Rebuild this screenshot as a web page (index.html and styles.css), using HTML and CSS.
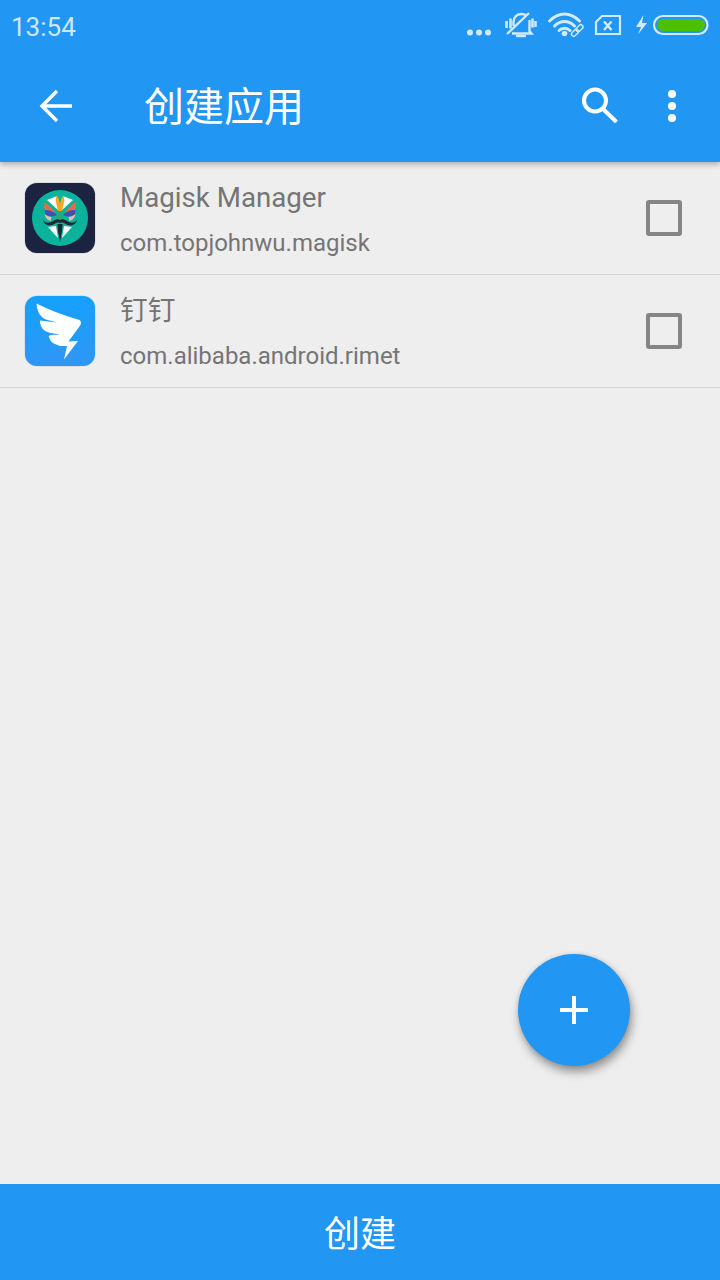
FILE: index.html
```html
<!DOCTYPE html>
<html lang="zh">
<head>
<meta charset="utf-8">
<title>创建应用</title>
<link rel="stylesheet" href="styles.css">
</head>
<body>
<div class="screen">
  <header class="header">
    <div class="status">
      <span class="time">13:54</span>
      <svg class="status-icons" width="270" height="50" viewBox="0 0 270 50" fill="none" stroke="#d3e9fc">
        <g fill="#d3e9fc" stroke="none"><circle cx="20" cy="32.500" r="3"/><circle cx="29" cy="32.500" r="3"/><circle cx="38" cy="32.500" r="3"/></g>
        <g stroke-width="2.400">
          <path d="M63.500 26v-4c0-5 3.500-8 8-8 2 0 3.500 .5 5 1.500"/>
          <path d="M79.500 20v11l2 2.500H62"/>
          <path d="M66 36h10"/>
          <path d="M56.500 21v7M60.500 18.500v10M82.500 18.500v9M85.500 21v6" stroke-width="2.600"/>
          <path d="M57 34L79 13"/>
        </g>
        <g stroke-width="3" stroke-linecap="round">
          <path d="M99.500 21c9-9.500 21-9.500 30 0"/>
          <path d="M104.500 26c6-6 14-6 20 0"/>
          <path d="M109 30.500c3-3 8-3 11 0"/>
        </g>
        <circle cx="114.500" cy="33.500" r="2.800" fill="#d3e9fc" stroke="none"/>
        <g stroke-width="1.400">
          <rect x="121" y="30.500" width="8" height="4.500" rx="2.200" transform="rotate(-45 125 32.750)"/>
          <rect x="125.500" y="26" width="8" height="4.500" rx="2.200" transform="rotate(-45 129.500 28.250)"/>
        </g>
        <path d="M146 22l6-6h18v18h-24z" stroke-width="2.200"/>
        <path d="M154 21.500l7.500 8.500M161.500 21.500L154 30" stroke-width="2.400"/>
        <path d="M193.500 15L186 27h5l-3 7.500L197 23h-5z" fill="#d3e9fc" stroke="none"/>
        <rect x="204" y="16" width="53.500" height="18" rx="9" stroke-width="2.200"/>
        <rect x="207" y="19" width="48" height="12" rx="6" fill="#4cc000" stroke="none"/>
      </svg>
    </div>
    <div class="toolbar">
      <svg class="icon-back" width="36" height="36" viewBox="0 0 36 36" fill="none" stroke="#fff" stroke-width="3.400">
        <path d="M33 18H3.500M18 3L3 18l15 15"/>
      </svg>
      <h1 class="title">创建应用</h1>
      <svg class="icon-search" width="36" height="36" viewBox="0 0 36 36" fill="none" stroke="#fff">
        <circle cx="13" cy="13.500" r="11" stroke-width="4"/>
        <path d="M21 22L34.500 35" stroke-width="4"/>
      </svg>
      <svg class="icon-more" width="12" height="36" viewBox="0 0 12 36" fill="#fff">
        <circle cx="6" cy="6" r="4"/><circle cx="6" cy="18" r="4"/><circle cx="6" cy="30" r="4"/>
      </svg>
    </div>
  </header>

  <main class="list">
    <div class="row">
      <svg class="app-icon" width="72" height="72" viewBox="-1 -1 72 72">
        <rect x="-0.500" y="-0.500" width="71" height="71" rx="12.500" fill="#c9cbd0"/>
        <rect width="70" height="70" rx="12" fill="#1b2340"/>
        <circle cx="35" cy="35" r="28" fill="#0cb39c"/>
        <path d="M22 17l10-4 1 14z" fill="#fff"/>
        <path d="M48 17l-10-4-1 14z" fill="#fff"/>
        <path d="M31 13c2 0 3 3 4 8 1-5 2-8 4-8 1 5-1 10-2 15h-4c-1-5-3-10-2-15z" fill="#f6a821"/>
        <path d="M20 19c-1 3-1 6 0 8 3 0 6 1 9 3l1-1z" fill="#f26a3b"/>
        <path d="M50 19c1 3 1 6 0 8-3 0-6 1-9 3l-1-1z" fill="#f26a3b"/>
        <path d="M19.500 27c5 0 9 1 12.500 5-3 2-9 2-12-1z" fill="#3f51b5"/>
        <path d="M50.500 27c-5 0-9 1-12.500 5 3 2 9 2 12-1z" fill="#3f51b5"/>
        <path d="M19.500 31c2 2 5 3 7 3l-1 4c-3-1-5-3-6-7z" fill="#f7b6c2"/>
        <path d="M50.500 31c-2 2-5 3-7 3l1 4c3-1 5-3 6-7z" fill="#f7b6c2"/>
        <path d="M33 28h4l1 10h-6z" fill="#2fa573"/>
        <path d="M18 37c3 4 7 3 10 1 3-2 5-2 7-1 2-1 4-1 7 1 3 2 7 3 10-1-1 5-7 7-11 4-2-1-4-2-6-1-2-1-4 0-6 1-4 3-10 1-11-4z" fill="#20262e"/>
        <path d="M23 44l8-1 2 12z" fill="#fff"/>
        <path d="M47 44l-8-1-2 12z" fill="#fff"/>
        <path d="M32.500 41h5l-.5 7-2 11-2-11z" fill="#20262e"/>
      </svg>
      <div class="text">
        <div class="name">Magisk Manager</div>
        <div class="pkg">com.topjohnwu.magisk</div>
      </div>
      <span class="check"></span>
    </div>
    <div class="row">
      <svg class="app-icon" width="72" height="72" viewBox="-1 -1 72 72">
        <defs>
          <linearGradient id="ding" x1="0" y1="0" x2="0" y2="1">
            <stop offset="0" stop-color="#14a1fd"/>
            <stop offset="1" stop-color="#2f96f5"/>
          </linearGradient>
        </defs>
        <rect x="-0.500" y="-0.500" width="71" height="71" rx="12.500" fill="#c6d6e4"/>
        <rect width="70" height="70" rx="12" fill="url(#ding)"/>
        <path d="M11.500 7.500C22 13 40 20 53 23.500c3 .8 3.500 3 2.500 5.500L43.500 45.500 53 45 39 63.500l3-13.500-7 0-5-2c-3-1-4.500-3-6-6.500-.5-1.500 0-2 2-2.500l9-.5-9.500-1.500C17 35 15 30 15 24.500l17 2-11-3C15 21 12 15 11.500 7.500z" fill="#fff"/>
      </svg>
      <div class="text">
        <div class="name">钉钉</div>
        <div class="pkg">com.alibaba.android.rimet</div>
      </div>
      <span class="check"></span>
    </div>
  </main>

  <button class="fab" type="button">
    <svg width="28" height="28" viewBox="0 0 28 28" fill="#fff"><path d="M12 0h4v12h12v4H16v12h-4V16H0v-4h12z"/></svg>
  </button>

  <footer class="bottom">创建</footer>
</div>
</body>
</html>
```

FILE: styles.css
```css
* { box-sizing: border-box; }
html, body { margin: 0; padding: 0; }
body {
  font-family: Roboto, "Noto Sans CJK SC", sans-serif;
}
.screen {
  position: relative;
  width: 720px;
  height: 1280px;
  display: flex;
  flex-direction: column;
  background: #eeeeee;
  overflow: hidden;
}
.header {
  position: relative;
  z-index: 1;
  height: 162px;
  flex: none;
  background: #2196f3;
  box-shadow: 0 2px 6px rgba(0, 0, 0, 0.3);
}
.status {
  height: 50px;
  display: flex;
  justify-content: space-between;
  align-items: center;
}
.time {
  padding: 4px 0 0 11px;
  font-size: 26px;
  font-weight: 400;
  color: #cfe7fb;
}
.toolbar {
  height: 112px;
  display: flex;
  align-items: center;
  padding: 0 0 0 39px;
}
.icon-back { flex: none; }
.title {
  flex: 1;
  margin: -4px 0 0 69px;
  font-family: "Noto Sans CJK SC", sans-serif;
  font-size: 40px;
  font-weight: 400;
  color: #fff;
}
.icon-search { flex: none; margin: -2px 0 0 0; }
.icon-more { flex: none; margin: 0 42px 0 48px; }
.list { flex: 1; }
.row {
  height: 113px;
  display: flex;
  align-items: center;
  padding: 0 38px 0 24px;
  border-bottom: 1px solid #d4d4d4;
}
.app-icon { flex: none; margin-bottom: 1px; }
.text {
  flex: 1;
  margin-left: 24px;
  color: #757575;
}
.name {
  font-size: 27.700px;
  line-height: 40px;
}
.pkg {
  margin-top: 9px;
  font-size: 24px;
  line-height: 32px;
}
.check {
  flex: none;
  width: 36px;
  height: 36px;
  border: 4px solid #858585;
  border-radius: 3px;
}
.fab {
  position: absolute;
  left: 518px;
  top: 954px;
  width: 112px;
  height: 112px;
  padding: 0;
  border: 0;
  border-radius: 50%;
  background: #2196f3;
  box-shadow: 2px 6px 10px rgba(0, 0, 0, 0.38), 0 0 4px rgba(0, 0, 0, 0.1);
  display: flex;
  align-items: center;
  justify-content: center;
}
.bottom {
  height: 96px;
  flex: none;
  display: flex;
  align-items: center;
  justify-content: center;
  padding-bottom: 2px;
  background: #2196f3;
  color: #fff;
  font-family: "Noto Sans CJK SC", sans-serif;
  font-size: 36px;
}
```
